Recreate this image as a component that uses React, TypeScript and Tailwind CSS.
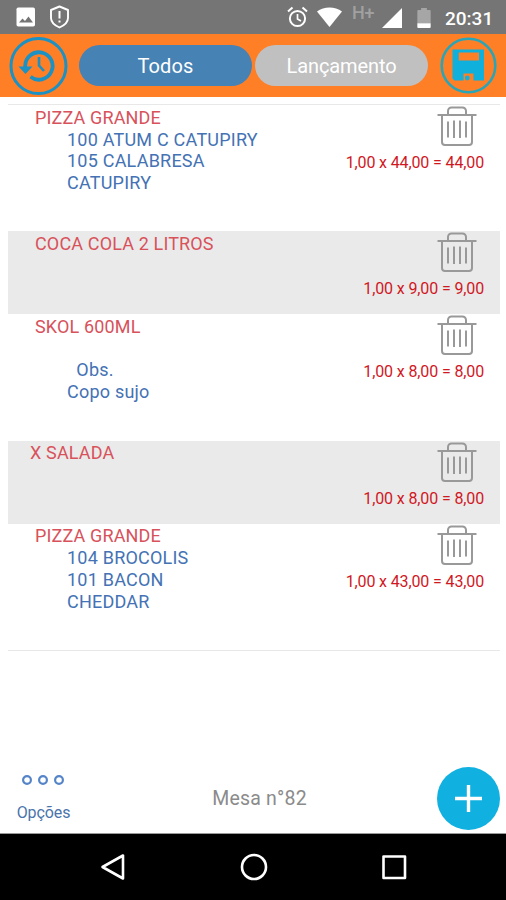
import React from 'react';

interface OrderItem {
    name: string;
    lines: string[];
    price: string;
    nameClass: string;
    rowClass: string;
}

const items: OrderItem[] = [
    {
        name: 'PIZZA GRANDE',
        lines: ['100 ATUM C CATUPIRY', '105 CALABRESA', 'CATUPIRY'],
        price: '1,00 x 44,00 = 44,00',
        nameClass: 'pl-[27px]',
        rowClass: 'h-[126px]',
    },
    {
        name: 'COCA COLA 2 LITROS',
        lines: [],
        price: '1,00 x 9,00 = 9,00',
        nameClass: 'pl-[27px]',
        rowClass: 'h-[83.2px] bg-[#eaeaea]',
    },
    {
        name: 'SKOL 600ML',
        lines: ['', '  Obs.', 'Copo sujo'],
        price: '1,00 x 8,00 = 8,00',
        nameClass: 'pl-[27px]',
        rowClass: 'h-[126.4px]',
    },
    {
        name: 'X SALADA',
        lines: [],
        price: '1,00 x 8,00 = 8,00',
        nameClass: 'pl-[22px]',
        rowClass: 'h-[83.2px] bg-[#eaeaea]',
    },
    {
        name: 'PIZZA GRANDE',
        lines: ['104 BROCOLIS', '101 BACON', 'CHEDDAR'],
        price: '1,00 x 43,00 = 43,00',
        nameClass: 'pl-[27px]',
        rowClass: 'h-[126px]',
    },
];

const TrashIcon = () => (
    <svg className="h-10 w-10" viewBox="0 0 40 40" fill="none" stroke="#999" strokeWidth={2}>
        <path d="M0.5 9H39.5" />
        <path d="M11 9V5a3.5 3.5 0 0 1 3.5-3.5h11A3.5 3.5 0 0 1 29 5v4" />
        <path d="M5 9v27a3 3 0 0 0 3 3h24a3 3 0 0 0 3-3V9" />
        <path d="M11 15.500v16M17 14.500v17.500M23 14.500v17.500M29 15.500v16" />
    </svg>
);

const StatusBar = () => (
    <div className="flex h-[34px] items-center bg-[#757575] text-white">
        <svg className="ml-4 h-5 w-5" viewBox="0 0 20 20">
            <rect x="0.500" y="0.500" width="18.500" height="19" rx="1.800" fill="#fff" />
            <path d="M3 15.500l3.500-4 2.500 2.500 3.500-4.500 4.500 6z" fill="#757575" />
        </svg>
        <svg className="ml-[13px] h-6 w-[21px]" viewBox="0 0 21 24" fill="none" stroke="#fff">
            <path d="M10.500 1.500l8.500 3.500v8c0 4-4 7.500-8.500 9.500C6 20.500 2 17 2 13V5z" strokeWidth={1.900} strokeLinejoin="round" />
            <path d="M10.500 6v7.500M10.500 15.500v2" strokeWidth={2} />
        </svg>
        <svg className="ml-auto h-[22px] w-[21px]" viewBox="0 0 21 22" fill="none" stroke="#fff" strokeWidth={2}>
            <circle cx="10.500" cy="12.500" r="7.600" />
            <path d="M10.500 8v5l3.500 2" strokeWidth={1.700} />
            <path d="M1 5.500l4.500-4M20 5.500l-4.500-4" />
        </svg>
        <svg className="ml-[9px] h-5 w-[25px]" viewBox="0 0 25 20">
            <path d="M0 4.500C7-1 18-1 25 4.500L12.500 20z" fill="#fff" />
        </svg>
        <span className="ml-[10px] w-[23px] pb-[8px] text-[18px] font-medium leading-none tracking-[-0.3px] text-[#a0a0a0]">H+</span>
        <svg className="ml-[7px] mt-[2px] h-5 w-5" viewBox="0 0 20 20">
            <path d="M20 0v20H0z" fill="#fff" />
        </svg>
        <svg className="ml-[15px] mt-px h-[20px] w-[14px]" viewBox="0 0 14 21">
            <path d="M4 0h6v2h3a1 1 0 0 1 1 1v13H0V3a1 1 0 0 1 1-1h3z" fill="#a6a6a6" />
            <path d="M0 16h14v4a1 1 0 0 1-1 1H1a1 1 0 0 1-1-1z" fill="#fff" />
        </svg>
        <span className="ml-[14px] mr-[11px] w-[50px] whitespace-nowrap pt-[3px] text-[19px] font-medium leading-none">20:31</span>
    </div>
);

const Header = () => (
    <div className="flex h-[63px] items-center bg-[#ff7f27] text-[20px] text-white">
        <button className="ml-[9px] h-[58px] w-[59px]">
            <svg viewBox="0 0 59 58" fill="none" stroke="#1b91c4">
                <circle cx="29.500" cy="29" r="27.500" strokeWidth={3} />
                <path d="M16.200 30.500V29A13.700 13.700 0 1 1 21.500 39.800" strokeWidth={3.800} />
                <path d="M9.500 29.500h14l-7 7.500z" fill="#1b91c4" stroke="none" />
                <path d="M30 20v8.500l5 5.500" strokeWidth={2.600} />
            </svg>
        </button>
        <button className="ml-[11px] h-[41px] w-[173px] rounded-full bg-[#4682b4] tracking-[0.1px]">Todos</button>
        <button className="ml-[3px] h-[41px] w-[173px] rounded-full bg-[#c0c0c0] tracking-[-0.1px]">Lançamento</button>
        <button className="ml-3 h-[57px] w-[57px]">
            <svg viewBox="0 0 57 57">
                <circle cx="28.500" cy="28.500" r="26.800" fill="none" stroke="#2aa5b8" strokeWidth={2.600} />
                <path
                    fillRule="evenodd"
                    fill="#0fb0dc"
                    d="M12.500 12.500H44V43.500H33.500V36.500H23.500V43.500H14.500L12.500 41.500ZM18.700 15.500V23.500H39V15.500Z"
                />
                <circle cx="27.300" cy="41" r="2.400" fill="#0fb0dc" />
            </svg>
        </button>
    </div>
);

const OrderRow = ({ item }: { item: OrderItem }) => (
    <li className={`flex justify-between ${item.rowClass}`}>
        <div className="pt-[1.5px] text-[18px] leading-[21.6px] tracking-[0.15px]">
            <p className={`text-[#d8525b] ${item.nameClass}`}>{item.name}</p>
            <div className="whitespace-pre pl-[59px] pt-[0.5px] tracking-[0.22px] text-[#4472b4]">
                {item.lines.map((line, i) => (
                    <p key={i} className="h-[21.6px]">{line}</p>
                ))}
            </div>
        </div>
        <div className="flex flex-col items-end pr-4 pt-px">
            <button className="mr-[7px] h-10 w-10">
                <TrashIcon />
            </button>
            <span className="mt-[7px] text-[16px] leading-5 tracking-[-0.13px] text-[#d0181f]">{item.price}</span>
        </div>
    </li>
);

const Footer = () => (
    <div className="flex h-[71px] items-center">
        <button className="flex w-[87px] flex-col items-center pt-0.5 text-[16px] text-[#4a74ac]">
            <svg className="-ml-px h-[10px] w-[42px]" viewBox="0 0 42 10" fill="none" stroke="#5585c8" strokeWidth={2.200}>
                <circle cx="5" cy="5" r="3.900" />
                <circle cx="21" cy="5" r="3.900" />
                <circle cx="37" cy="5" r="3.900" />
            </svg>
            <span className="mt-[18px] leading-5 tracking-[-0.1px]">Opções</span>
        </button>
        <p className="flex-1 pl-[15px] pt-[3px] text-center text-[19.5px] tracking-[0.2px] text-[#8b8b8b]">Mesa n°82</p>
        <button className="mr-[6px] h-[63px] w-[83px] pl-5">
            <svg className="mt-px h-[63px] w-[63px]" viewBox="0 0 63 63">
                <circle cx="31.500" cy="31.500" r="31.500" fill="#10b0e0" />
                <path d="M31.500 18v27M18 31.500h27" stroke="#fff" strokeWidth={3.400} />
            </svg>
        </button>
    </div>
);

const NavBar = () => (
    <div className="flex h-[67px] items-center justify-center gap-[112.5px] border-t border-[#999] bg-black pl-px">
        <svg className="h-7 w-7" viewBox="0 0 28 28" fill="none" stroke="#fff" strokeWidth={2.600} strokeLinejoin="round">
            <path d="M3.500 14L24 2.500v23z" />
        </svg>
        <svg className="h-7 w-7" viewBox="0 0 28 28" fill="none" stroke="#fff" strokeWidth={2.600}>
            <circle cx="14" cy="14" r="12" />
        </svg>
        <svg className="h-7 w-7" viewBox="0 0 28 28" fill="none" stroke="#fff" strokeWidth={2.600} strokeLinejoin="round">
            <rect x="3.500" y="3.500" width="21.500" height="21.500" />
        </svg>
    </div>
);

export default function App() {
    return (
        <div className="flex h-[900px] w-[506px] flex-col overflow-hidden bg-white font-[Roboto,sans-serif]">
            <StatusBar />
            <Header />
            <ul className="ml-2 mr-[6px] mt-[7px] border-y border-[#e8e8e8]">
                {items.map((item, i) => (
                    <OrderRow key={i} item={item} />
                ))}
            </ul>
            <div className="mt-auto">
                <Footer />
                <NavBar />
            </div>
        </div>
    );
}
